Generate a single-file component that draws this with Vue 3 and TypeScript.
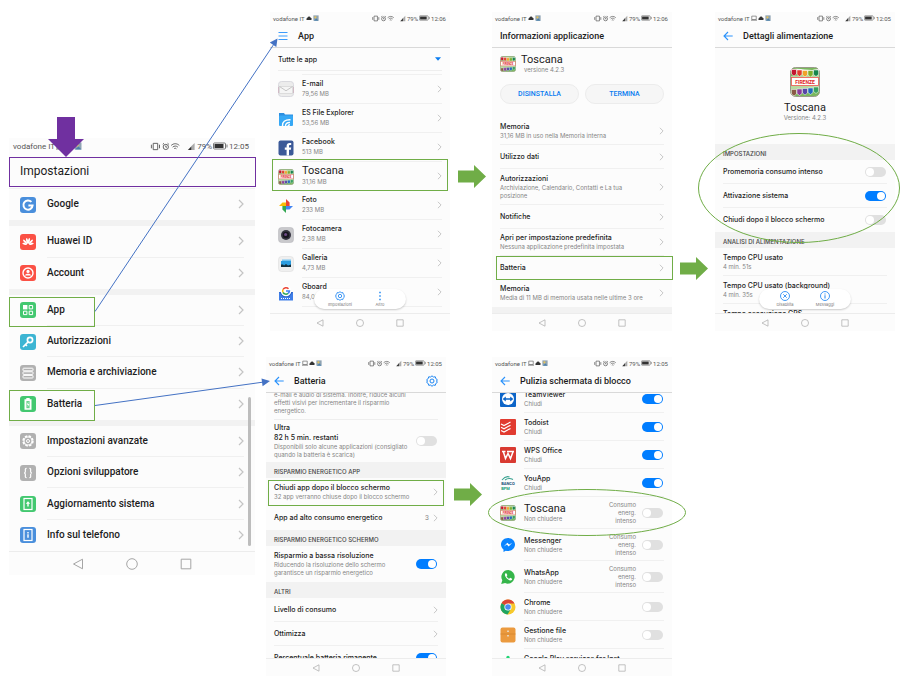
<script setup lang="ts">
interface Item {
  kind: 'row' | 'section' | 'band' | 'filter' | 'para' | 'appHead' | 'buttons' | 'hero'
  name?: string
  sub?: string[]
  lead?: string
  icon?: string
  size?: string
  big?: boolean
  toggle?: boolean
  value?: string
  note?: string[]
  last?: boolean
}
interface Phone {
  id: string
  clock: string
  cast?: boolean
  title: string
  nav?: 'menu' | 'back'
  gear?: boolean
  items: Item[]
  pill?: { icon: string; label: string }[]
}

const main = (name: string, icon: string, last = false): Item => ({ kind: 'row', name, icon, last })
const app = (name: string, icon: string, sub: string, big = false): Item => ({
  kind: 'row', name, icon, sub: [sub], big, size: 'h29',
})
const lock = (name: string, icon: string, toggle: boolean, note?: string[], big = false): Item => ({
  kind: 'row', name, icon, toggle, note, big, sub: [toggle ? 'Chiudi' : 'Non chiudere'], size: note ? 'h32' : 'h28',
})
const heavy = ['Consumo', 'energ.', 'intenso']

const phones: Phone[] = [
  {
    id: 'settings', clock: '12:05', cast: true, title: 'Impostazioni',
    items: [
      main('Google', 'google', true),
      { kind: 'band' },
      main('Huawei ID', 'huawei'),
      main('Account', 'account', true),
      { kind: 'band' },
      main('App', 'apps'),
      main('Autorizzazioni', 'key'),
      main('Memoria e archiviazione', 'storage'),
      main('Batteria', 'battery', true),
      { kind: 'band' },
      main('Impostazioni avanzate', 'advanced'),
      main('Opzioni sviluppatore', 'dev'),
      main('Aggiornamento sistema', 'update'),
      main('Info sul telefono', 'info', true),
    ],
  },
  {
    id: 'apps', clock: '12:06', title: 'App', nav: 'menu',
    items: [
      { kind: 'filter', name: 'Tutte le app' },
      app('E-mail', 'mail', '79,56 MB'),
      app('ES File Explorer', 'es', '53,56 MB'),
      app('Facebook', 'facebook', '513 MB'),
      app('Toscana', 'toscana', '31,16 MB', true),
      app('Foto', 'photos', '233 MB'),
      app('Fotocamera', 'camera', '2,38 MB'),
      app('Galleria', 'gallery', '4,73 MB'),
      app('Gboard', 'gboard', '84,09 MB'),
    ],
    pill: [{ icon: 'gear', label: 'Impostazioni' }, { icon: 'dots', label: 'Altro' }],
  },
  {
    id: 'appinfo', clock: '12:06', title: 'Informazioni applicazione',
    items: [
      { kind: 'appHead', name: 'Toscana', sub: ['versione 4.2.3'] },
      { kind: 'buttons' },
      { kind: 'row', name: 'Memoria', sub: ['31,16 MB in uso nella Memoria interna'], size: 'h27' },
      { kind: 'row', name: 'Utilizzo dati', size: 'h24' },
      { kind: 'row', name: 'Autorizzazioni', sub: ['Archiviazione, Calendario, Contatti e La tua', 'posizione'], size: 'h36' },
      { kind: 'row', name: 'Notifiche', size: 'h24' },
      { kind: 'row', name: 'Apri per impostazione predefinita', sub: ['Nessuna applicazione predefinita impostata'], size: 'h27' },
      { kind: 'row', name: 'Batteria', size: 'h24' },
      { kind: 'row', name: 'Memoria', sub: ['Media di 11 MB di memoria usata nelle ultime 3 ore'], size: 'h27', last: true },
      { kind: 'band' },
    ],
  },
  {
    id: 'power', clock: '12:05', cast: true, title: 'Dettagli alimentazione', nav: 'back',
    items: [
      { kind: 'hero', name: 'Toscana', sub: ['Versione: 4.2.3'] },
      { kind: 'section', name: 'IMPOSTAZIONI' },
      { kind: 'row', name: 'Promemoria consumo intenso', toggle: false, size: 'h24' },
      { kind: 'row', name: 'Attivazione sistema', toggle: true, size: 'h24' },
      { kind: 'row', name: 'Chiudi dopo il blocco schermo', toggle: false, size: 'h24', last: true },
      { kind: 'section', name: 'ANALISI DI ALIMENTAZIONE' },
      { kind: 'row', name: 'Tempo CPU usato', sub: ['4 min. 51s'], size: 'h28', value: ' ' },
      { kind: 'row', name: 'Tempo CPU usato (background)', sub: ['4 min. 35s'], size: 'h28', value: ' ' },
      { kind: 'row', name: 'Tempo esecuzione GPS', sub: ['0s'], size: 'h28', value: ' ' },
    ],
    pill: [{ icon: 'disable', label: 'Disabilita' }, { icon: 'message', label: 'Messaggi' }],
  },
  {
    id: 'batt', clock: '12:05', cast: true, title: 'Batteria', nav: 'back', gear: true,
    items: [
      { kind: 'para', sub: ['e-mail e audio di sistema. Inoltre, riduce alcuni', 'effetti visivi per incrementare il risparmio', 'energetico.'] },
      { kind: 'row', name: 'Ultra', lead: '82 h 5 min. restanti', sub: ['Disponibili solo alcune applicazioni (consigliato', 'quando la batteria è scarica)'], toggle: false, size: 'h42', last: true },
      { kind: 'section', name: 'RISPARMIO ENERGETICO APP' },
      { kind: 'row', name: 'Chiudi app dopo il blocco schermo', sub: ['32 app verranno chiuse dopo il blocco schermo'], size: 'h28' },
      { kind: 'row', name: 'App ad alto consumo energetico', value: '3', size: 'h24', last: true },
      { kind: 'section', name: 'RISPARMIO ENERGETICO SCHERMO' },
      { kind: 'row', name: 'Risparmio a bassa risoluzione', sub: ['Riducendo la risoluzione dello schermo', 'garantisce un risparmio energetico'], toggle: true, size: 'h36', last: true },
      { kind: 'section', name: 'ALTRI' },
      { kind: 'row', name: 'Livello di consumo', size: 'h24' },
      { kind: 'row', name: 'Ottimizza', size: 'h24' },
      { kind: 'row', name: 'Percentuale batteria rimanente', toggle: true, size: 'h24' },
    ],
  },
  {
    id: 'lock', clock: '12:05', cast: true, title: 'Pulizia schermata di blocco', nav: 'back',
    items: [
      lock('TeamViewer', 'teamviewer', true),
      lock('Todoist', 'todoist', true),
      lock('WPS Office', 'wps', true),
      lock('YouApp', 'youapp', true),
      lock('Toscana', 'toscana', false, heavy, true),
      lock('Messenger', 'messenger', false, heavy),
      lock('WhatsApp', 'whatsapp', false, heavy),
      lock('Chrome', 'chrome', false),
      lock('Gestione file', 'files', false),
      lock('Google Play services for Inst', 'play', false),
    ],
  },
]

const hasChevron = (i: Item) => i.toggle === undefined && i.value !== ' '
const rowTag = (i: Item) => (i.toggle !== undefined ? 'label' : hasChevron(i) ? 'a' : 'div')
</script>

<template>
  <main class="board">
    <svg class="defs" width="0" height="0" aria-hidden="true">
      <symbol id="google" viewBox="0 0 16 16"><rect width="16" height="16" rx="3" fill="#4a8fdc" /><path d="M11.4 4.9A4.6 4.6 0 1 0 12.6 8.4H8.4" fill="none" stroke="#fff" stroke-width="2" /></symbol>
      <symbol id="huawei" viewBox="0 0 16 16"><rect width="16" height="16" rx="3" fill="#fb5145" /><g fill="#fff"><ellipse cx="8" cy="6.8" rx="1" ry="3" transform="rotate(-12 8 11)" /><ellipse cx="8" cy="6.8" rx="1" ry="3" transform="rotate(12 8 11)" /><ellipse cx="8" cy="6.8" rx="1" ry="3" transform="rotate(-42 8 11)" /><ellipse cx="8" cy="6.8" rx="1" ry="3" transform="rotate(42 8 11)" /><ellipse cx="8" cy="7.4" rx=".9" ry="2.4" transform="rotate(-72 8 11)" /><ellipse cx="8" cy="7.4" rx=".9" ry="2.4" transform="rotate(72 8 11)" /></g></symbol>
      <symbol id="account" viewBox="0 0 16 16"><rect width="16" height="16" rx="3" fill="#fb5145" /><circle cx="8" cy="8" r="5" fill="none" stroke="#fff" stroke-width="1.4" /><circle cx="8" cy="6.4" r="1.6" fill="#fff" /><path d="M5 10.6C5 8.2 11 8.2 11 10.6Z" fill="#fff" /></symbol>
      <symbol id="apps" viewBox="0 0 16 16"><rect width="16" height="16" rx="3" fill="#43c870" /><path d="M3 3h4.4v4.4H3z" fill="#fff" /><g fill="none" stroke="#fff"><path d="M9.2 3.5h3.4v3.4H9.2zM3.5 9.2h3.4v3.4H3.5zM9.2 9.2h3.4v3.4H9.2z" /></g></symbol>
      <symbol id="key" viewBox="0 0 16 16"><rect width="16" height="16" rx="3" fill="#3db5d3" /><circle cx="10" cy="6" r="2.6" fill="none" stroke="#fff" stroke-width="1.7" /><path d="M8.2 7.9 3 13M5.4 10.4l1.5 1.6" stroke="#fff" stroke-width="1.7" fill="none" /></symbol>
      <symbol id="storage" viewBox="0 0 16 16"><rect width="16" height="16" rx="3" fill="#b1b1b1" /><g fill="none" stroke="#fff"><rect x="3" y="3.2" width="10" height="2.6" rx=".6" /><rect x="3" y="6.8" width="10" height="2.6" rx=".6" /><rect x="3" y="10.4" width="10" height="2.6" rx=".6" /></g></symbol>
      <symbol id="battery" viewBox="0 0 16 16"><rect width="16" height="16" rx="3" fill="#43c870" /><path d="M6.3 2h3.4v1.3h1.8v10.4h-7V3.3h1.8z" fill="#fff" /><path d="M6.4 5h3.2v7.200H6.400z" fill="#43c870" opacity=".8" /><path d="M8.4 5.600 6.800 8.800h1.200l-.4 2.400 1.800-3.100H8.200z" fill="#fff" /></symbol>
      <symbol id="advanced" viewBox="0 0 16 16"><rect width="16" height="16" rx="3" fill="#b1b1b1" /><circle cx="8" cy="8" r="4.9" fill="none" stroke="#fff" stroke-width="1.6" stroke-dasharray="2.5 1.35" /><circle cx="8" cy="8" r="4" fill="none" stroke="#fff" stroke-width="1.1" /><circle cx="8" cy="8" r="1.5" fill="none" stroke="#fff" /></symbol>
      <symbol id="dev" viewBox="0 0 16 16"><rect width="16" height="16" rx="3" fill="#b1b1b1" /><path d="M6.6 3.4C4.8 3.4 5.4 5 5.4 6.2S4.9 8 4 8c.9 0 1.4.6 1.4 1.8S4.8 12.6 6.6 12.6M9.4 3.4c1.8 0 1.2 1.6 1.2 2.8S11.1 8 12 8c-.9 0-1.4.6-1.4 1.8s.6 2.8-1.2 2.8" fill="none" stroke="#fff" stroke-width="1.2" /></symbol>
      <symbol id="update" viewBox="0 0 16 16"><rect width="16" height="16" rx="3" fill="#43c870" /><rect x="4" y="2.5" width="8" height="11" fill="none" stroke="#fff" stroke-width="1.2" /><path d="M8 5.2 5.8 7.7H7.3V10.4H8.7V7.7H10.2Z" fill="#fff" /></symbol>
      <symbol id="info" viewBox="0 0 16 16"><rect width="16" height="16" rx="3" fill="#4a8fdc" /><rect x="4" y="2.5" width="8" height="11" fill="none" stroke="#fff" stroke-width="1.2" /><path d="M7.3 5h1.4v1.4H7.3zM7.3 7.2h1.4v3.6H7.3z" fill="#fff" /></symbol>

      <symbol id="mail" viewBox="0 0 16 16"><rect x=".5" y=".5" width="15" height="15" rx="3" fill="#ececec" stroke="#d9d9de" /><path d="M1.5 5.5h13v7h-13z" fill="#f5f5f5" stroke="#cfcfcf" stroke-width=".6" /><path d="m1.5 5.5 6.5 4.3 6.5-4.3" fill="none" stroke="#b9b9b9" stroke-width=".8" /><path d="M.5 6v6M15.5 6v6" stroke="#c9a4b4" stroke-width=".6" /></symbol>
      <symbol id="es" viewBox="0 0 16 16"><path d="M1 2h5l1 1.5h8v4H1z" fill="#2d8fe0" /><rect x="1" y="4.5" width="14" height="10.5" rx="1" fill="#36a8f5" /><path d="M4.5 15C4.100 11 7 8.500 12.500 8.800M7.500 15c0-2.400 1.600-3.600 4.500-3.500M10 15c.2-.8.8-1.200 2-1.200" fill="none" stroke="#fff" stroke-width="1.500" /></symbol>
      <symbol id="facebook" viewBox="0 0 16 16"><rect x=".5" y=".5" width="15" height="15" rx="2" fill="#3b5998" /><path d="M8.6 15.5V9.8H6.8V7.5h1.8V5.9c0-2.1 1.2-3 2.9-3h1.7v2.2H12c-.8 0-1 .4-1 1.1v1.3h2.2l-.3 2.3H11v5.7z" fill="#fff" /></symbol>
      <symbol id="toscana" viewBox="0 0 30 30"><rect x=".5" y=".5" width="29" height="29" rx="5" fill="#79b85c" stroke="#9a9a8a" /><path d="M1 9 29 7v14L1 23z" fill="#b7d8a0" /><path d="M1 3.500C10 1 20 6 29 3" fill="none" stroke="#f4f4f4" stroke-width="2" /><g stroke="#fff" stroke-width=".5"><path d="M1.500 2.500h5v4.500L4 9 1.500 7z" fill="#c4152f" /><path d="M7 3h5v4.500l-2.500 2L7 7.500z" fill="#e23b2e" /><path d="M12.500 3.500h5V8L15 10l-2.500-2z" fill="#f0a32a" /><path d="M18 3.500h5V8l-2.500 2L18 8z" fill="#7cae2c" /><path d="M23.500 3h5v4.500l-2.500 2-2.500-2z" fill="#16844d" /><path d="M1.500 22.500h5V27L4 29l-2.500-2z" fill="#8a5b46" /><path d="M7 22h5v4.500l-2.500 2-2.500-2z" fill="#8c3d9b" /><path d="M12.500 21.500h5V26L15 28l-2.500-2z" fill="#5646a8" /><path d="M18 21h5v4.500l-2.500 2-2.500-2z" fill="#2269bd" /><path d="M23.500 20h5v4.500l-2.500 2-2.500-2z" fill="#399f5f" /></g><rect x="1.500" y="10.500" width="27" height="8" fill="#fff" stroke="#ef5350" stroke-width=".8" /><text x="15" y="16.500" text-anchor="middle" font-family="Roboto, sans-serif" font-weight="700" font-size="5" fill="#e01a22">FIRENZE</text></symbol>
      <symbol id="photos" viewBox="0 0 16 16"><path d="M8 8V1l3.6 3.5V8z" fill="#e94335" /><path d="M8 8h7l-3.500 3.600H8z" fill="#4285f4" /><path d="M8 8v7l-3.600-3.500V8z" fill="#34a853" /><path d="M8 8H1l3.500-3.600H8z" fill="#fbbc05" /></symbol>
      <symbol id="camera" viewBox="0 0 16 16"><rect x=".5" y=".5" width="15" height="15" rx="3" fill="#c9c9cc" stroke="#b9b9bd" stroke-width=".6" /><circle cx="8" cy="8" r="5" fill="#353440" /><circle cx="8" cy="8" r="3.2" fill="#17161f" /><circle cx="7.6" cy="7.5" r="1.500" fill="#6d4a86" /></symbol>
      <symbol id="gallery" viewBox="0 0 16 16"><rect x=".5" y=".5" width="15" height="15" rx="3" fill="#efefef" stroke="#dedede" stroke-width=".6" /><path d="M4 3.500h9v7H4z" fill="#79c5f0" /><path d="M3 5h10v6H3z" fill="#2c9de0" /><path d="M3 8.500h2l1 1 2-1.500 2 1.500 3-1V11H3z" fill="#14303f" /></symbol>
      <symbol id="gboard" viewBox="0 0 16 16"><path d="M1 7h14v8.500H1z" fill="#3f7ee8" /><path d="M1 7h14l-4 5H5z" fill="#2c63c6" /><path d="M3 13.500h10" stroke="#fff" stroke-dasharray="1 1" /><circle cx="8" cy="6" r="5.300" fill="#fff" /><path d="M10.500 3.800A3.400 3.400 0 0 0 5 4.500" fill="none" stroke="#ea4335" stroke-width="1.500" /><path d="M5 4.500a3.400 3.400 0 0 0 0 3" fill="none" stroke="#fbbc05" stroke-width="1.500" /><path d="M5 7.500a3.400 3.400 0 0 0 5 .9" fill="none" stroke="#34a853" stroke-width="1.500" /><path d="M8 6.100h3.400a3.400 3.400 0 0 1-1.400 2.400" fill="none" stroke="#4285f4" stroke-width="1.500" /></symbol>

      <symbol id="teamviewer" viewBox="0 0 16 16"><rect width="16" height="16" rx="1" fill="#0d65c8" /><circle cx="8" cy="8" r="6" fill="#fff" /><path d="M2.600 8 5.800 5.500v1.700h4.400V5.500L13.400 8l-3.200 2.500V8.800H5.800v1.700z" fill="#0d65c8" /></symbol>
      <symbol id="todoist" viewBox="0 0 16 16"><rect width="16" height="16" rx="1" fill="#e13b30" /><g fill="none" stroke="#fff" stroke-width="1.100"><path d="m1 5 3 1.600L10.500 3M1 8.200l3 1.600 6.500-3.600M1 11.400 4 13l6.500-3.600" /></g></symbol>
      <symbol id="wps" viewBox="0 0 16 16"><rect width="16" height="16" rx="1" fill="#d93a31" /><path d="M2 4.500h3.500M3.300 4.500l2.200 7L8 6.500l2.500 5 2.800-7.500M7 4.500h7" fill="none" stroke="#fff" stroke-width="1.500" /></symbol>
      <symbol id="youapp" viewBox="0 0 16 16"><path d="M2 5C4 2.500 7 1 9.500 2M5 5c2-1.500 5-2 8-.5" fill="none" stroke="#35a08e" stroke-width="1.100" /><text x="8" y="9.500" text-anchor="middle" font-family="Roboto, sans-serif" font-weight="700" font-size="4" fill="#174e78">BANCO</text><text x="5.500" y="14.500" text-anchor="middle" font-family="Roboto, sans-serif" font-weight="700" font-size="4" fill="#219b76">BPM</text></symbol>
      <symbol id="messenger" viewBox="0 0 16 16"><path d="M8 1C4.100 1 1 3.900 1 7.500c0 2 1 3.800 2.500 5V15l2.300-1.300c.7.200 1.400.3 2.200.3 3.900 0 7-2.900 7-6.500S11.900 1 8 1z" fill="#0a84ff" /><path d="m3.800 9.400 3.500-3.700 1.900 1.800 3-1.800-3.500 3.700-1.900-1.800z" fill="#fff" /></symbol>
      <symbol id="whatsapp" viewBox="0 0 16 16"><path d="M8.200 1a6.800 6.800 0 0 0-5.900 10.200L1.200 15l3.900-1A6.800 6.800 0 1 0 8.200 1z" fill="#35b54a" /><path d="M5.600 4.300c-1 .6-1 2 .3 3.900s3.300 3.300 4.700 3.200c1.100-.1 1.700-1.200 1.500-1.700L10.200 8.800l-1 1C8 9.400 6.900 8.200 6.600 7.200l.8-.9-.8-1.900z" fill="#fff" /></symbol>
      <symbol id="chrome" viewBox="0 0 16 16"><circle cx="8" cy="8" r="7.500" fill="#f7c92b" /><path d="M8 8 1.500 4.200A7.500 7.500 0 0 1 14.500 4.400H8z" fill="#db4437" /><path d="M8 8 1.500 4.200A7.500 7.500 0 0 0 7.500 15.500L11 9.800z" fill="#1da462" /><circle cx="8" cy="8" r="3.600" fill="#fff" /><circle cx="8" cy="8" r="2.800" fill="#4a8af4" /></symbol>
      <symbol id="files" viewBox="0 0 16 16"><rect x=".5" y=".5" width="15" height="15" rx="2" fill="#eb9a3e" /><path d="M.5 7h15" stroke="#d4872f" stroke-width=".8" /><path d="M8 3.500v1.500M8 8v1.500" stroke="#e9e2d4" stroke-width="1.600" /></symbol>
      <symbol id="play" viewBox="0 0 16 16"><circle cx="8" cy="2.500" r="1.700" fill="#1fd574" /><path d="M8 5v9" stroke="#1fd574" stroke-width="2" /></symbol>

      <symbol id="gear" viewBox="0 0 12 12"><path d="m6 .8 1.400 1.200 1.900-.2.500 1.800 1.500 1.100L10.600 6l.7 1.400-1.500 1.100-.5 1.800-1.900-.2L6 11.300l-1.400-1.200-1.900.2-.5-1.800L.7 7.400 1.400 6 .7 4.700l1.500-1.100.5-1.800 1.900.2z" fill="none" stroke="#1d86f3" stroke-width="1" /><circle cx="6" cy="6" r="2" fill="none" stroke="#1d86f3" stroke-width="1" /></symbol>
      <symbol id="dots" viewBox="0 0 12 12"><path d="M5.200 1h1.600v1.600H5.200zM5.200 5.200h1.600v1.600H5.200zM5.200 9.400h1.600V11H5.200z" fill="#0a7cf0" /></symbol>
      <symbol id="disable" viewBox="0 0 12 12"><circle cx="6" cy="6" r="5.400" fill="none" stroke="#1d86f3" /><path d="m3.900 3.900 4.200 4.200m0-4.200L3.900 8.100" stroke="#1d86f3" /></symbol>
      <symbol id="message" viewBox="0 0 12 12"><circle cx="6" cy="6" r="5.400" fill="none" stroke="#1d86f3" /><path d="M5.400 3h1.200v1.200H5.400zM5.400 5h1.200v4H5.400z" fill="#1d86f3" /></symbol>
      <symbol id="menu" viewBox="0 0 10 10"><path d="M.5 1.500h9M.5 5h9M.5 8.500h9" stroke="#3c9bfb" stroke-width="1.200" /></symbol>
      <symbol id="back" viewBox="0 0 10 10"><path d="M9.700 5H1M5 1 1 5l4 4" fill="none" stroke="#2a92fb" stroke-width="1.100" /></symbol>
      <symbol id="cast" viewBox="0 0 8 8"><path d="M1 1.500h6v4.500H1zM0 7h8" fill="none" stroke="#555" stroke-width=".8" /></symbol>
      <symbol id="cloud" viewBox="0 0 8 8"><path d="M1 6.500a1.600 1.600 0 0 1 .7-2.500A2.400 2.400 0 0 1 6.200 3.500a1.800 1.800 0 0 1 .8 3z" fill="#333" /></symbol>
      <symbol id="pic" viewBox="0 0 8 8"><path d="M.5.5h7v7h-7z" fill="#8fa3b2" /><circle cx="3.200" cy="3" r="1.500" fill="#e6c35c" /><path d="m1 7.500 3.500-3 3 3z" fill="#4a80aa" /></symbol>
      <symbol id="status" viewBox="0 0 50 10"><g fill="none" stroke="#555"><path d="M3 1.500h5v7H3zM1 3v4M10 3v4" stroke-width="1" /><circle cx="17" cy="5.500" r="2.900" /><path d="M17 4v1.700h1.300M13.600 2.600 15 1.400M20.400 2.600 19 1.400" /><path d="M23 3.800c2.800-2.500 6.200-2.500 9 0M24.600 5.700c1.800-1.600 4-1.600 5.800 0M26.200 7.500c.8-.7 1.800-.7 2.600 0" /></g><path d="M49 1v8h-3.500V4.500z" fill="#aaa" /><path d="M45.500 4.800V9h-4z" fill="#333" /></symbol>
      <symbol id="cell" viewBox="0 0 15 8"><rect x=".5" y="1" width="12" height="6" rx="1" fill="#fff" stroke="#777" /><path d="M1.500 2h9v4h-9z" fill="#333" /><path d="M14 2.500v3" stroke="#777" /></symbol>
    </svg>

    <section v-for="p in phones" :key="p.id" class="phone" :class="p.id" :aria-label="p.title">
      <div class="status">
        <span>vodafone IT</span>
        <svg v-if="p.cast" class="s-small"><use href="#cast" /></svg>
        <svg class="s-small"><use href="#cloud" /></svg>
        <svg class="s-small"><use href="#pic" /></svg>
        <svg class="s-icons"><use href="#status" /></svg>
        <span>79%</span>
        <svg class="s-cell"><use href="#cell" /></svg>
        <span>{{ p.clock }}</span>
      </div>
      <header class="head">
        <button v-if="p.nav" type="button" class="plain" :aria-label="p.nav === 'menu' ? 'Menu' : 'Indietro'"><svg class="navicon"><use :href="'#' + p.nav" /></svg></button>
        <h2>{{ p.title }}</h2>
        <button v-if="p.gear" type="button" class="plain end" aria-label="Impostazioni"><svg class="gear"><use href="#gear" /></svg></button>
      </header>

      <div class="body">
        <template v-for="(i, n) in p.items" :key="n">
          <h3 v-if="i.kind === 'section'" class="section">{{ i.name }}</h3>
          <div v-else-if="i.kind === 'band'" class="band"></div>
          <div v-else-if="i.kind === 'filter'" class="filter">
            <select aria-label="Filtro"><option>{{ i.name }}</option></select>
            <svg viewBox="0 0 6 4"><path d="M0 .3h6L3 3.800z" fill="#0a7cf0" /></svg>
          </div>
          <p v-else-if="i.kind === 'para'" class="para"><span v-for="s in i.sub" :key="s" class="sub">{{ s }}</span></p>
          <div v-else-if="i.kind === 'appHead'" class="app-head">
            <svg class="icon"><use href="#toscana" /></svg>
            <div class="app-text"><strong class="big">{{ i.name }}</strong><span class="sub">{{ i.sub?.[0] }}</span></div>
          </div>
          <div v-else-if="i.kind === 'buttons'" class="buttons">
            <button type="button">DISINSTALLA</button>
            <button type="button">TERMINA</button>
          </div>
          <div v-else-if="i.kind === 'hero'" class="hero">
            <svg><use href="#toscana" /></svg>
            <strong class="big">{{ i.name }}</strong>
            <span class="sub">{{ i.sub?.[0] }}</span>
          </div>
          <component
            :is="rowTag(i)"
            v-else
            class="row"
            :class="[i.size, { last: i.last }]"
            :href="rowTag(i) === 'a' ? '#' : undefined"
          >
            <svg v-if="i.icon" class="icon"><use :href="'#' + i.icon" /></svg>
            <span class="cell">
              <span class="text">
                <span class="name" :class="{ big: i.big }">{{ i.name }}</span>
                <span v-if="i.lead" class="lead">{{ i.lead }}</span>
                <span v-for="s in i.sub" :key="s" class="sub">{{ s }}</span>
              </span>
              <span v-if="i.note" class="note"><span v-for="s in i.note" :key="s" class="sub">{{ s }}</span></span>
              <span v-if="i.value" class="value">{{ i.value }}</span>
              <input v-if="i.toggle !== undefined" type="checkbox" role="switch" class="switch" :checked="i.toggle" />
              <svg v-else-if="hasChevron(i)" class="chev" viewBox="0 0 6 10"><path d="m1 1 4 4-4 4" fill="none" stroke="#c4c4c4" stroke-width="1.200" /></svg>
            </span>
          </component>
        </template>
        <i v-if="p.id === 'settings'" class="scroll"></i>
      </div>

      <div v-if="p.pill" class="pill">
        <button v-for="b in p.pill" :key="b.label" type="button">
          <svg><use :href="'#' + b.icon" /></svg>{{ b.label }}
        </button>
      </div>

      <nav class="nav">
        <button type="button" class="plain" aria-label="Indietro"><svg viewBox="0 0 12 12"><path d="M10.500 1.200v9.600L1.500 6z" /></svg></button>
        <button type="button" class="plain" aria-label="Home"><svg viewBox="0 0 12 12"><circle cx="6" cy="6" r="5.300" /></svg></button>
        <button type="button" class="plain" aria-label="Recenti"><svg viewBox="0 0 12 12"><path d="M1.200 1.200h9.600v9.600H1.200z" /></svg></button>
      </nav>
    </section>

    <svg class="marks" width="916" height="694" viewBox="0 0 916 694" aria-hidden="true">
      <path d="M57 117h18v22h9l-18 18-18-18h9z" fill="#7030a0" />
      <rect x="9.500" y="157.500" width="246" height="29" fill="none" stroke="#7030a0" />
      <g fill="none" stroke="#70ad47">
        <rect x="9.500" y="297.500" width="85" height="29" />
        <rect x="9.500" y="390.500" width="85" height="30" />
        <rect x="272.500" y="159.500" width="175" height="31" />
        <rect x="496.500" y="256.500" width="176" height="23" />
        <rect x="268.500" y="480.500" width="175" height="25" />
        <ellipse cx="799" cy="188" rx="100.500" ry="54.500" />
        <ellipse cx="587" cy="512.500" rx="98.500" ry="23" />
      </g>
      <g fill="#70ad47">
        <path d="M458 170.500h16V165l12 11.500-12 11.500v-5.500h-16z" />
        <path d="M680 262.500h16V257l12 11.500-12 11.500v-5.500h-16z" />
        <path d="M454 488.500h16V483l12 11.500-12 11.500v-5.500h-16z" />
      </g>
      <g stroke="#4472c4"><path d="M95 311.500 274 44M95 405.500 264 382" /></g>
      <path d="m277.500 38.500-1.200 8.500-6.500-4.400zM270 381l-7.400 5.200-1.100-7.800z" fill="#4472c4" />
    </svg>
  </main>
</template>

<style>
body {
  margin: 0;
  background: #fff;
}
</style>

<style scoped>
.board {
  position: relative;
  min-height: 694px;
  overflow: hidden;
  font-family: Roboto, 'Liberation Sans', sans-serif;
  color: #1c1c1c;
}
.defs,
.marks {
  position: absolute;
  left: 0;
  top: 0;
  pointer-events: none;
}
/* Screens are nodes of the flow diagram. */
.phone {
  position: absolute;
  display: flex;
  flex-direction: column;
  width: 180px;
  height: 319px;
  background: #fcfcfc;
}
.settings {
  left: 9px;
  top: 138px;
  width: 246px;
  height: 437px;
}
.apps {
  left: 270px;
  top: 12px;
}
.appinfo {
  left: 492px;
  top: 12px;
}
.power {
  left: 715px;
  top: 12px;
}
.batt {
  left: 266px;
  top: 357px;
}
.lock {
  left: 492px;
  top: 357px;
}
h2,
h3,
p {
  margin: 0;
  font-weight: 400;
}
button {
  font-family: inherit;
}
.plain {
  display: flex;
  padding: 0;
  border: 0;
  background: none;
}
.status {
  display: flex;
  align-items: center;
  flex: none;
  height: 12px;
  padding: 0 4px 0 3px;
  gap: 1px;
  font-size: 6px;
  color: #555;
  white-space: nowrap;
}
.s-small {
  width: 6px;
  height: 6px;
}
.s-icons {
  width: 34px;
  height: 7px;
  margin-left: auto;
}
.s-cell {
  width: 11px;
  height: 6px;
}
.head {
  display: flex;
  align-items: center;
  box-sizing: border-box;
  flex: none;
  height: 24px;
  padding: 0 8px;
  gap: 10px;
  border-bottom: 1px solid #d9d9d9;
}
h2 {
  font-size: 9px;
  font-weight: 500;
  color: #1c1c1c;
}
.navicon {
  width: 10px;
  height: 10px;
}
.end {
  margin-left: auto;
}
.gear {
  width: 12px;
  height: 12px;
}
.body {
  flex: 1;
  min-height: 0;
  overflow: hidden;
}
.row {
  display: flex;
  align-items: center;
  gap: 8px;
  padding: 0 8px;
  color: inherit;
  text-decoration: none;
}
.icon {
  flex: none;
  width: 16px;
  height: 16px;
}
.cell {
  display: flex;
  align-items: center;
  box-sizing: border-box;
  flex: 1;
  align-self: stretch;
  border-bottom: 1px solid #f0f0f0;
}
.last .cell {
  border-color: transparent;
}
.text {
  display: flex;
  flex-direction: column;
  flex: 1;
  white-space: nowrap;
}
.name,
.lead {
  font-family: Inter, Roboto, sans-serif;
  font-size: 7px;
  font-weight: 500;
  line-height: 10px;
}
.sub {
  display: block;
  font-family: Inter, Roboto, sans-serif;
  font-size: 6px;
  line-height: 8px;
  color: #858585;
  white-space: nowrap;
}
.big {
  font-family: Roboto, sans-serif;
  font-size: 11px;
  font-weight: 400;
  line-height: 12px;
}
.h24 {
  height: 24px;
}
.h27 {
  height: 27px;
}
.h28 {
  height: 28px;
}
.h29 {
  height: 29px;
}
.h32 {
  height: 32px;
}
.h36 {
  height: 36px;
}
.h42 {
  height: 42px;
}
.chev {
  flex: none;
  width: 5px;
  height: 8px;
}
.value {
  margin-right: 4px;
  font-size: 7px;
  color: #8a8a8a;
}
.note {
  margin-right: 6px;
  text-align: right;
}
.switch {
  appearance: none;
  display: flex;
  align-items: center;
  box-sizing: border-box;
  flex: none;
  width: 21px;
  height: 10px;
  margin: 0 1px 0 0;
  padding: 0 1px;
  border-radius: 5px;
  background: #e0e0e0;
}
.switch::after {
  content: '';
  width: 8px;
  height: 8px;
  border-radius: 50%;
  background: #fff;
}
.switch:checked {
  justify-content: flex-end;
  background: #007dff;
}
.section {
  display: flex;
  align-items: center;
  box-sizing: border-box;
  height: 16px;
  padding: 2px 8px 0;
  background: #f2f2f2;
  font-family: Inter, Roboto, sans-serif;
  font-size: 6px;
  font-weight: 500;
  color: #444;
}
.band {
  flex: none;
  height: 6px;
  background: #f2f2f2;
}
.filter {
  display: flex;
  align-items: center;
  justify-content: space-between;
  height: 22px;
  margin: 0 8px 3px;
  padding-right: 1px;
  border-bottom: 1px solid #eee;
}
.filter + .row {
  height: 30px;
}
.filter + .row .cell {
  border-top: 1px solid #f0f0f0;
}
.filter select {
  appearance: none;
  flex: 1;
  padding: 0;
  border: 0;
  background: none;
  font: 500 7px Inter, Roboto, sans-serif;
  color: #1c1c1c;
}
.filter svg {
  width: 6px;
  height: 4px;
}
.para {
  margin: -2px 8px 0;
  padding-bottom: 4px;
  border-bottom: 1px solid #eee;
}
.app-head {
  display: flex;
  align-items: center;
  gap: 5px;
  padding: 6px 8px 10px;
}
.app-head .sub {
  padding-left: 3px;
}
.app-text {
  display: flex;
  flex-direction: column;
}
.buttons {
  display: flex;
  gap: 6px;
  padding: 0 8px 14px;
}
.buttons button {
  flex: 1;
  height: 20px;
  padding: 0;
  border: 1px solid #ececec;
  border-radius: 10px;
  background: #f6f6f6;
  font-size: 7px;
  font-weight: 500;
  color: #0a7cf0;
}
.hero {
  display: flex;
  flex-direction: column;
  align-items: center;
  box-sizing: border-box;
  height: 96px;
  padding-top: 19px;
}
.hero svg {
  width: 30px;
  height: 30px;
  margin-bottom: 5px;
}
.pill {
  position: absolute;
  left: 44px;
  bottom: 22px;
  display: flex;
  justify-content: center;
  width: 92px;
  height: 20px;
  border-radius: 10px;
  background: #fff;
  box-shadow: 0 1px 2px #0003;
}
.pill button {
  display: flex;
  flex-direction: column;
  align-items: center;
  width: 40px;
  padding: 2px 0 0;
  border: 0;
  background: none;
  font-family: Inter, Roboto, sans-serif;
  font-size: 4px;
  line-height: 8px;
  color: #777;
}
.pill svg {
  width: 10px;
  height: 10px;
}
.nav {
  display: flex;
  align-items: center;
  justify-content: center;
  box-sizing: border-box;
  flex: none;
  height: 18px;
  gap: 32px;
  border-top: 1px solid #ececec;
}
.nav svg {
  width: 8px;
  height: 8px;
  fill: none;
  stroke: #a5a5a5;
  stroke-width: 1px;
}
.apps .sub {
  line-height: 10px;
}
.lock .body .row:first-child {
  margin-top: -8px;
}
/* The first screen is shown at a larger scale. */
.settings .status {
  height: 16px;
  padding: 0 6px 0 4px;
  font-size: 8px;
}
.settings .s-small {
  width: 8px;
  height: 8px;
}
.settings .s-icons {
  width: 46px;
  height: 9px;
}
.settings .s-cell {
  width: 15px;
  height: 8px;
}
.settings .head {
  height: 35px;
  padding: 0 11px;
  border-color: #f0f0f0;
}
.settings h2 {
  font-size: 12px;
  font-weight: 400;
}
.settings .body {
  display: flex;
  flex-direction: column;
}
.settings .row {
  flex: 1;
  gap: 11px;
  padding: 0 11px;
}
.settings .name {
  font-family: Roboto, sans-serif;
  font-size: 10px;
  line-height: 12px;
}
.settings .chev {
  width: 6px;
  height: 10px;
}
.settings .nav {
  height: 24px;
  gap: 42px;
}
.settings .nav svg {
  width: 12px;
  height: 12px;
}
.scroll {
  position: absolute;
  right: 4px;
  bottom: 29px;
  width: 3px;
  height: 149px;
  border-radius: 2px;
  background: #bdbdbd;
}
</style>
